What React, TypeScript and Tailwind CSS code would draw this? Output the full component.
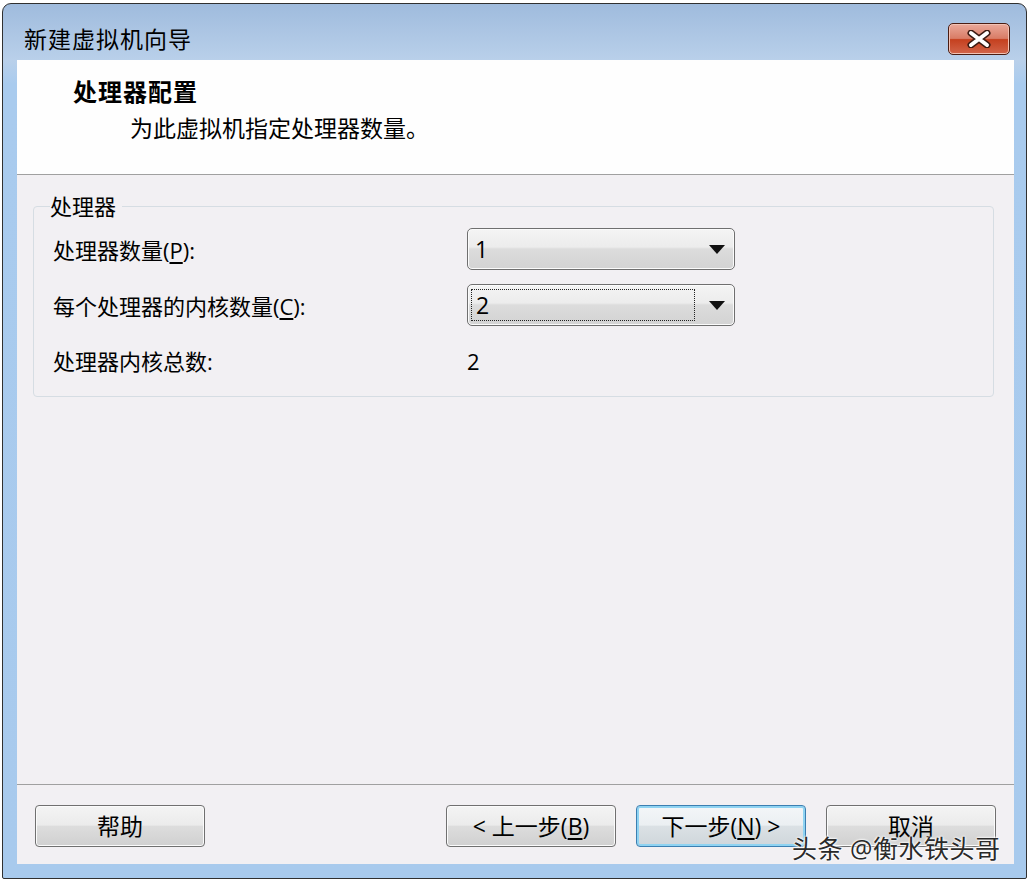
import React from 'react';

const font = "font-['Open_Sans','Noto_Sans_CJK_SC',sans-serif]";

const ComboArrow = () => (
  <svg width="16" height="9" viewBox="0 0 16 9" className="shrink-0">
    <polygon points="0,0 16,0 8,9" fill="#111" />
  </svg>
);

function Combo({ value, focused }: { value: string; focused?: boolean }) {
  return (
    <div className="flex h-[42px] w-[268px] items-center rounded-[5px] border border-[#6f6f6f] bg-[linear-gradient(to_bottom,#f4f4f4_0%,#ececec_45%,#dcdcdc_50%,#d3d3d3_100%)] pr-[9px] shadow-[inset_0_0_0_1px_#fbfbfb]">
      <div
        className={`ml-[3px] mr-[14px] flex h-[32px] flex-1 items-center pl-[4px] text-[23px] leading-none text-black ${
          focused ? 'border border-dotted border-[#222]' : ''
        }`}
      >
        {value}
      </div>
      <ComboArrow />
    </div>
  );
}

function Button({ children, primary }: { children: React.ReactNode; primary?: boolean }) {
  return (
    <div
      className={`flex h-[42px] w-[170px] items-center justify-center rounded-[4px] border text-[23px] text-black ${
        primary
          ? 'border-[#3c7fb1] bg-[linear-gradient(to_bottom,#f3f6f8_0%,#ebeff2_48%,#dbe1e5_50%,#cfd6db_100%)] shadow-[inset_0_0_0_2px_#8fd3f2]'
          : 'border-[#707070] bg-[linear-gradient(to_bottom,#f4f4f4_0%,#ebebeb_48%,#dddddd_50%,#d0d0d0_100%)] shadow-[inset_0_0_0_1px_#fbfbfb]'
      }`}
    >
      {children}
    </div>
  );
}

export default function App() {
  return (
    <div className={`relative h-[882px] w-[1030px] overflow-hidden bg-white ${font}`}>
      <div className="ml-[2px] mt-[3px] flex h-[876px] w-[1025px] flex-col rounded-t-[9px] rounded-b-[2px] border border-[#303030] bg-[linear-gradient(to_bottom,#9fbbdd_0px,#b9d0ea_56px,#a9cbee_80px,#a8caed_100%)]">
        {/* Title bar */}
        <div className="flex h-[56px] shrink-0 items-center justify-between pl-[21px] pr-[16px] pt-[14px]">
          <span className="text-[23px] tracking-[1px] text-black">新建虚拟机向导</span>
          <div className="flex h-[32px] w-[62px] items-center justify-center rounded-[5px] border border-[#4a1d12] bg-[linear-gradient(to_bottom,#eaa99a_0%,#d97c66_48%,#c5401f_52%,#d2654a_100%)] shadow-[inset_0_0_0_1px_#f2c2b4]">
            <svg width="26" height="18" viewBox="0 0 26 18">
              <path d="M5 3 L21 15 M21 3 L5 15" stroke="#3b1a12" strokeWidth="7" strokeLinecap="round" />
              <path d="M5 3 L21 15 M21 3 L5 15" stroke="#ffffff" strokeWidth="4" strokeLinecap="round" />
            </svg>
          </div>
        </div>

        {/* Client area */}
        <div className="ml-[14px] mr-[12px] flex h-[804px] flex-col bg-[#f2f0f3]">
          {/* Header */}
          <div className="h-[114px] shrink-0 bg-[#fefefe] pl-[56px] pt-[18px]">
            <div className="text-[24px] font-bold leading-[28px] tracking-[1px] text-black">处理器配置</div>
            <div className="ml-[57px] mt-[8px] text-[23px] leading-[28px] text-black">为此虚拟机指定处理器数量。</div>
          </div>
          <div className="h-px shrink-0 bg-[#a0a0a0]" />

          {/* Body */}
          <div className="flex-1 pl-[16px] pr-[20px] pt-[17px]">
            <fieldset className="rounded-[4px] border border-[#d6dde3] px-[19px] pb-[21px]">
              <legend className="-ml-[3px] pr-[6px] text-[22px] leading-[28px] text-black">处理器</legend>
              <div className="mt-[8px] grid grid-cols-[414px_268px] items-center gap-y-[14px] text-[22px] text-black">
                <div className="pt-[2px]">
                  处理器数量(<span className="underline underline-offset-[3px]">P</span>):
                </div>
                <Combo value="1" />
                <div className="pt-[2px]">
                  每个处理器的内核数量(<span className="underline underline-offset-[3px]">C</span>):
                </div>
                <Combo value="2" focused />
                <div className="mt-[7px] leading-[28px]">处理器内核总数:</div>
                <div className="mt-[7px] leading-[28px]">2</div>
              </div>
            </fieldset>
          </div>

          <div className="h-px shrink-0 bg-[#a0a0a0]" />
          {/* Buttons */}
          <div className="flex h-[79px] shrink-0 items-start justify-between px-[18px] pt-[20px]">
            <Button>帮助</Button>
            <div className="flex gap-[20px]">
              <Button>
                &lt; 上一步(<span className="underline underline-offset-[3px]">B</span>)
              </Button>
              <Button primary>
                下一步(<span className="underline underline-offset-[3px]">N</span>) &gt;
              </Button>
              <Button>取消</Button>
            </div>
          </div>
        </div>
      </div>

      {/* Watermark */}
      <div className="absolute left-[792px] top-[831px] text-[25px] leading-[34px] tracking-[0.5px] text-[#2a2a2a] [text-shadow:0_0_2px_#fff,0_0_2px_#fff,0_0_3px_#fff]">
        头条 @衡水铁头哥
      </div>
    </div>
  );
}
